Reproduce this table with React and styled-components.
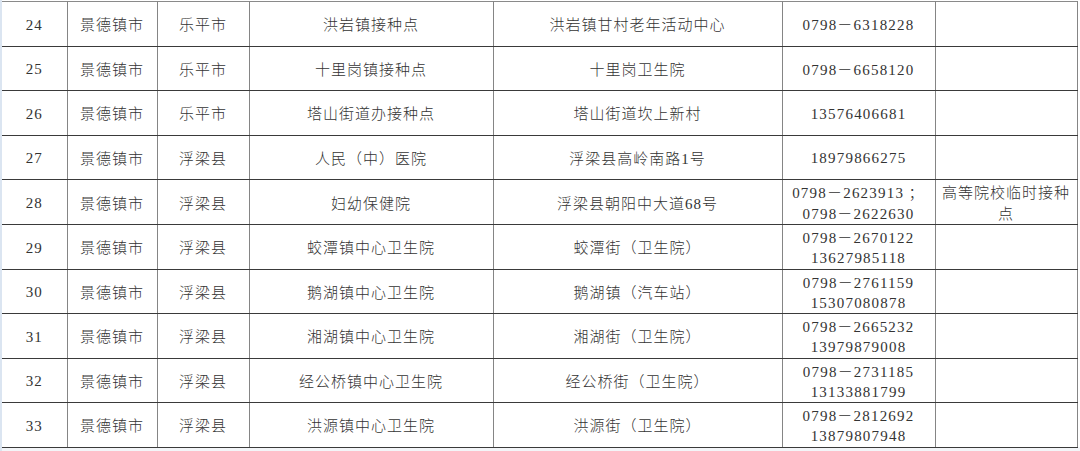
import React from 'react'
import styled, { createGlobalStyle } from 'styled-components'

const GlobalStyle = createGlobalStyle`
  html, body {
    margin: 0;
    padding: 0;
    background: #ffffff;
  }
  body {
    width: 1080px;
    height: 451px;
    overflow: hidden;
  }
`

const Sheet = styled.div`
  width: 1080px;
  height: 451px;
  box-sizing: border-box;
  padding-top: 1px;
  border-left: 2px solid #dbe5f1;
  background: linear-gradient(to bottom, #ffffff 447px, #f3f5f8 447px);
`

const Table = styled.table`
  width: 1075px;
  border-collapse: collapse;
  table-layout: fixed;
  color: #333333;
  font-family: "Liberation Serif", "Noto Sans CJK SC", serif;
  font-size: 15px;
  letter-spacing: 1px;
`

const Row = styled.tr`
  height: 44.5px;
  & > td {
    border-top: 1px solid ${(p) => (p.$light ? '#8a8a8a' : '#3a3a3a')};
  }
`

const Cell = styled.td`
  padding: 0 6px;
  border-left: 1px solid ${(p) => (p.$dark ? '#3a3a3a' : '#858585')};
  border-right: 1px solid #858585;
  border-bottom: 1px solid #3a3a3a;
  text-align: center;
  vertical-align: middle;
  line-height: 20px;
  white-space: ${(p) => (p.$wrap ? 'normal' : 'nowrap')};
  padding-top: 2px;
  &:first-child {
    border-left: none;
  }
`

const Han = styled.span`
  font-family: "Noto Sans CJK SC", serif;
  font-weight: 300;
`

const Phone = styled.div`
  font-family: "Liberation Serif", "Noto Sans CJK SC", serif;
  letter-spacing: 1.2px;
`

const rows = [
  ['24', '乐平市', '洪岩镇接种点', '洪岩镇甘村老年活动中心', ['0798－6318228'], ''],
  ['25', '乐平市', '十里岗镇接种点', '十里岗卫生院', ['0798－6658120'], ''],
  ['26', '乐平市', '塔山街道办接种点', '塔山街道坎上新村', ['13576406681'], ''],
  ['27', '浮梁县', '人民（中）医院', '浮梁县高岭南路1号', ['18979866275'], ''],
  ['28', '浮梁县', '妇幼保健院', '浮梁县朝阳中大道68号', ['0798－2623913 ；', '0798－2622630'], '高等院校临时接种点'],
  ['29', '浮梁县', '蛟潭镇中心卫生院', '蛟潭街（卫生院）', ['0798－2670122', '13627985118'], ''],
  ['30', '浮梁县', '鹅湖镇中心卫生院', '鹅湖镇（汽车站）', ['0798－2761159', '15307080878'], ''],
  ['31', '浮梁县', '湘湖镇中心卫生院', '湘湖街（卫生院）', ['0798－2665232', '13979879008'], ''],
  ['32', '浮梁县', '经公桥镇中心卫生院', '经公桥街（卫生院）', ['0798－2731185', '13133881799'], ''],
  ['33', '浮梁县', '洪源镇中心卫生院', '洪源街（卫生院）', ['0798－2812692', '13879807948'], ''],
]

// mixes digits (serif) and Chinese (CJK) in one line
const Mixed = ({ text }) => {
  const parts = text.split(/(\d+)/).filter(Boolean)
  return parts.map((s, i) => (/^\d+$/.test(s) ? <span key={i}>{s}</span> : <Han key={i}>{s}</Han>))
}

export default function App() {
  return (
    <Sheet>
      <GlobalStyle />
      <Table>
        <colgroup>
          <col style={{ width: 65 }} />
          <col style={{ width: 90 }} />
          <col style={{ width: 92 }} />
          <col style={{ width: 244 }} />
          <col style={{ width: 289 }} />
          <col style={{ width: 153 }} />
          <col style={{ width: 142 }} />
        </colgroup>
        <tbody>
          {rows.map(([no, county, site, addr, phones, note], i) => (
            <Row key={no} $light={i === 0 || i === 4}>
              <Cell>{no}</Cell>
              <Cell><Han>景德镇市</Han></Cell>
              <Cell><Han>{county}</Han></Cell>
              <Cell><Mixed text={site} /></Cell>
              <Cell><Mixed text={addr} /></Cell>
              <Cell>
                {phones.map((p) => (
                  <Phone key={p}><Mixed text={p} /></Phone>
                ))}
              </Cell>
              <Cell $dark $wrap><Han>{note}</Han></Cell>
            </Row>
          ))}
        </tbody>
      </Table>
    </Sheet>
  )
}
